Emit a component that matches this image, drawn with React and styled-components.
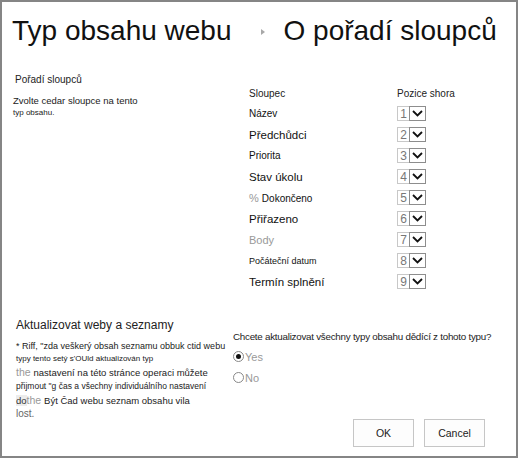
import React from "react";
import styled, { createGlobalStyle } from "styled-components";

const Global = createGlobalStyle`
  html, body { margin: 0; padding: 0; background: #fff; }
  body { font-family: "Liberation Sans", Arial, sans-serif; color: #222; }
`;

const Frame = styled.div`
  width: 518px;
  height: 458px;
  box-sizing: border-box;
  border: 2px solid #858585;
  display: flex;
  flex-direction: column;
  overflow: hidden;
`;

const Header = styled.div`
  display: flex;
  align-items: center;
  height: 58px;
  padding-left: 10px;
  flex-shrink: 0;
`;

const Title = styled.div`
  font-size: 28px;
  color: #111;
  white-space: nowrap;
`;

const Sep = styled.div`
  width: 0;
  height: 0;
  border-top: 3px solid transparent;
  border-bottom: 3px solid transparent;
  border-left: 4px solid #a8a8a8;
  margin: 2px 19px 0 29px;
`;

const Section = styled.div`
  display: grid;
  grid-template-columns: 231px 1fr;
  margin-top: ${p => p.$mt || 0}px;
`;

const Left = styled.div`
  padding-left: ${p => p.$pl || 11}px;
  padding-top: ${p => p.$pt || 0}px;
`;

const SectionTitle = styled.div`
  font-size: ${p => p.$size || 10}px;
  color: #222;
  margin-left: ${p => p.$ml || 0}px;
  margin-bottom: ${p => p.$mb || 0}px;
  white-space: nowrap;
`;

const Desc = styled.div`
  font-size: ${p => p.$size || 9}px;
  color: ${p => p.$color || "#222"};
  line-height: ${p => p.$lh || 12}px;
  white-space: nowrap;
`;

const Gray = styled.span`
  color: #999;
  font-size: ${p => p.$size || 11}px;
`;

const Hl = styled.span`
  background: #ececec;
  color: #333;
`;

const Table = styled.div`
  display: grid;
  grid-template-columns: 148px 70px;
  grid-template-rows: 15px;
  grid-auto-rows: 21px;
  align-items: center;
  padding-top: 28px;
  padding-left: 16px;
`;

const HeadCell = styled.div`
  font-size: 10px;
  color: #222;
  white-space: nowrap;
  align-self: start;
`;

const Cell = styled.div`
  font-size: ${p => p.$size || 10}px;
  color: ${p => p.$color || "#111"};
  white-space: nowrap;
`;

const Select = styled.div`
  display: flex;
  height: 15px;
  width: 30px;
`;

const Num = styled.div`
  width: 12px;
  border: 1px solid #c8c8c8;
  border-right: none;
  font-size: 12px;
  line-height: 14px;
  color: #777;
  text-align: center;
  box-sizing: border-box;
  height: 15px;
`;

const Arrow = styled.div`
  width: 17px;
  height: 15px;
  box-sizing: border-box;
  border: 1px solid #8d8d8d;
  display: flex;
  align-items: center;
  justify-content: center;
  background: #fff;
`;

const Right = styled.div`
  display: flex;
  flex-direction: column;
`;

const Question = styled.div`
  font-size: 9.8px;
  letter-spacing: -0.25px;
  color: #222;
  white-space: nowrap;
  margin-top: 17px;
  margin-bottom: 4px;
`;

const RadioRow = styled.label`
  display: flex;
  align-items: center;
  gap: 1px;
  height: 21px;
  font-size: 11px;
  color: #999;
`;

const RadioCircle = styled.span`
  width: 11px;
  height: 11px;
  border-radius: 50%;
  border: 1px solid #888;
  box-sizing: border-box;
  display: flex;
  align-items: center;
  justify-content: center;
  &::after {
    content: "";
    width: 5px;
    height: 5px;
    border-radius: 50%;
    background: ${p => (p.$on ? "#111" : "transparent")};
  }
`;

const Buttons = styled.div`
  display: flex;
  gap: 10px;
  margin-top: 31px;
  padding-left: 120px;
`;

const Button = styled.button`
  width: 61px;
  height: 28px;
  border: 1px solid #c6c6c6;
  background: #fdfdfd;
  font-family: "Liberation Sans", Arial, sans-serif;
  font-size: 10.5px;
  color: #222;
  padding: 0;
`;

const Chevron = () => (
  <svg width="11" height="7" viewBox="0 0 11 7">
    <path d="M1 1 L5.5 5.5 L10 1" fill="none" stroke="#111" strokeWidth="1.8" />
  </svg>
);

const rows = [
  { label: "Název", size: 10 },
  { label: "Předchůdci", size: 11.5 },
  { label: "Priorita", size: 10 },
  { label: "Stav úkolu", size: 11.5 },
  { label: "Dokončeno", size: 10, pct: true },
  { label: "Přiřazeno", size: 11.5 },
  { label: "Body", size: 11, color: "#999" },
  { label: "Počáteční datum", size: 9 },
  { label: "Termín splnění", size: 11.5 },
];

export default function App() {
  return (
    <>
      <Global />
      <Frame>
        <Header>
          <Title>Typ obsahu webu</Title>
          <Sep />
          <Title>O pořadí sloupců</Title>
        </Header>
        <Section>
          <Left $pl={11} $pt={14}>
            <SectionTitle $size={10} $ml={2} $mb={10}>Pořadí sloupců</SectionTitle>
            <Desc $size={9.5}>Zvolte cedar sloupce na tento</Desc>
            <Desc $size={8}>typ obsahu.</Desc>
          </Left>
          <Table>
            <HeadCell>Sloupec</HeadCell>
            <HeadCell>Pozice shora</HeadCell>
            {rows.map((r, i) => (
              <React.Fragment key={r.label}>
                <Cell $size={r.size} $color={r.color}>
                  {r.pct && <Gray>% </Gray>}
                  {r.label}
                </Cell>
                <Select>
                  <Num>{i + 1}</Num>
                  <Arrow>
                    <Chevron />
                  </Arrow>
                </Select>
              </React.Fragment>
            ))}
          </Table>
        </Section>
        <Section $mt={22}>
          <Left $pl={14} $pt={4}>
            <SectionTitle $size={12} $mb={8}>Aktualizovat weby a seznamy</SectionTitle>
            <Desc $size={9} $lh={12}>* Riff, "zda veškerý obsah seznamu obbuk ctid webu</Desc>
            <Desc $size={8} $lh={13}>typy tento setý s'OUld aktualizován typ</Desc>
            <Desc $size={9.5} $lh={15}><Gray $size={10.5}>the </Gray>nastavení na této stránce operaci můžete</Desc>
            <Desc $size={8.5} $lh={13}>přijmout "g čas a všechny individuálního nastavení</Desc>
            <Desc $size={9.5} $lh={15}><Hl>do</Hl><Gray $size={10.5}>the </Gray>Být Čad webu seznam obsahu vila</Desc>
            <Desc $size={10} $lh={12} $color="#666">lost.</Desc>
          </Left>
          <Right>
            <Question>Chcete aktualizovat všechny typy obsahu dědící z tohoto typu?</Question>
            <RadioRow>
              <RadioCircle $on />
              Yes
            </RadioRow>
            <RadioRow>
              <RadioCircle />
              No
            </RadioRow>
            <Buttons>
              <Button>OK</Button>
              <Button>Cancel</Button>
            </Buttons>
          </Right>
        </Section>
      </Frame>
    </>
  );
}
